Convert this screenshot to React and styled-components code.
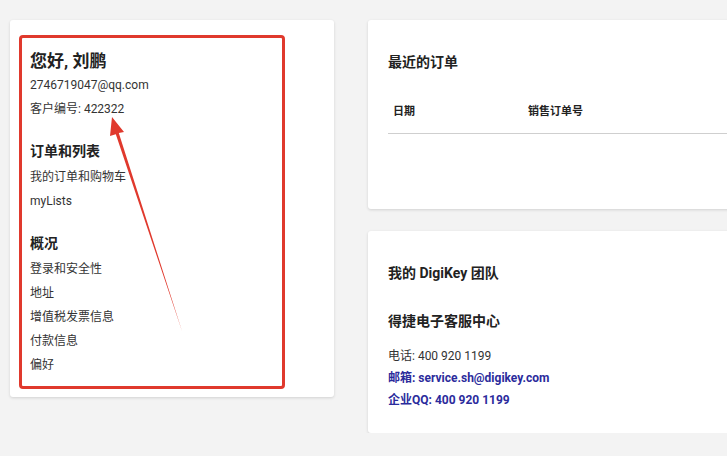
import React from 'react';
import styled, { createGlobalStyle } from 'styled-components';

const GlobalStyle = createGlobalStyle`
  html, body {
    margin: 0;
    padding: 0;
    background: #f3f3f3;
    overflow: hidden;
  }
  body {
    font-family: Roboto, "Noto Sans CJK SC", sans-serif;
    color: #333;
  }
`;

const Page = styled.div`
  display: flex;
  align-items: flex-start;
  gap: 34px;
  padding: 20px 0 0 10px;
  width: 1200px;
`;

const Card = styled.div`
  position: relative;
  background: #fff;
  border-radius: 3px;
  box-shadow: 0 1px 3px rgba(0, 0, 0, 0.14);
`;

const ProfileCard = styled(Card)`
  width: 324px;
  box-sizing: border-box;
  padding: 15px 0 8px 9px;
`;

const Highlight = styled.div`
  width: 266px;
  box-sizing: border-box;
  border: 3px solid #e0392d;
  border-radius: 4px;
  padding: 11px 8px 9px 8px;
`;

const Greeting = styled.div`
  font-size: 17px;
  font-weight: 700;
  line-height: 24px;
  color: #222;
`;

const Line = styled.div`
  font-size: 12px;
  line-height: 24px;
  color: #333;
`;

const SectionTitle = styled.div`
  font-size: 14px;
  font-weight: 700;
  line-height: 24px;
  color: #222;
  margin: 18px 0 2px;
`;

const Arrow = styled.svg`
  position: absolute;
  left: 0;
  top: 0;
  pointer-events: none;
`;

const Column = styled.div`
  display: flex;
  flex-direction: column;
  gap: 22px;
`;

const WideCard = styled(Card)`
  width: 420px;
  box-sizing: border-box;
  padding: ${(p) => p.$pad};
`;

const CardTitle = styled.div`
  font-size: 14px;
  font-weight: 700;
  line-height: 24px;
  color: #222;
`;

const Table = styled.div`
  margin-top: 22px;
  display: grid;
  grid-template-columns: 135px 1fr;
  padding: 8px 0 13px 5px;
  border-bottom: 1px solid #cfcfcf;
  font-size: 11px;
  font-weight: 700;
  line-height: 16px;
  color: #222;
`;

const SubTitle = styled(CardTitle)`
  margin: 24px 0 12px;
`;

const Contact = styled.div`
  font-size: 12px;
  line-height: 22px;
  color: ${(p) => (p.$link ? '#2b2b9c' : '#333')};
  font-weight: ${(p) => (p.$link ? 700 : 400)};
`;

const tip = [102, 97];
const tail = [172, 311];

const RedArrow = () => (
  <Arrow width="324" height="377" viewBox="0 0 324 377">
    <polygon
      points={`${tip[0]},${tip[1]} 114,112 108.8,113 ${tail[0]},${tail[1]} 105.8,114.2 100,116`}
      fill="#e0392d"
    />
  </Arrow>
);

export default function App() {
  return (
    <>
      <GlobalStyle />
      <Page>
        <ProfileCard>
          <Highlight>
            <Greeting>您好, 刘鹏</Greeting>
            <Line>2746719047@qq.com</Line>
            <Line>客户编号: 422322</Line>
            <SectionTitle>订单和列表</SectionTitle>
            <Line>我的订单和购物车</Line>
            <Line>myLists</Line>
            <SectionTitle>概况</SectionTitle>
            <Line>登录和安全性</Line>
            <Line>地址</Line>
            <Line>增值税发票信息</Line>
            <Line>付款信息</Line>
            <Line>偏好</Line>
          </Highlight>
          <RedArrow />
        </ProfileCard>
        <Column>
          <WideCard $pad="30px 0 75px 20px">
            <CardTitle>最近的订单</CardTitle>
            <Table>
              <span>日期</span>
              <span>销售订单号</span>
            </Table>
          </WideCard>
          <WideCard $pad="30px 0 22px 20px">
            <CardTitle>我的 DigiKey 团队</CardTitle>
            <SubTitle>得捷电子客服中心</SubTitle>
            <Contact>电话: 400 920 1199</Contact>
            <Contact $link>邮箱: service.sh@digikey.com</Contact>
            <Contact $link>企业QQ: 400 920 1199</Contact>
          </WideCard>
        </Column>
      </Page>
    </>
  );
}
